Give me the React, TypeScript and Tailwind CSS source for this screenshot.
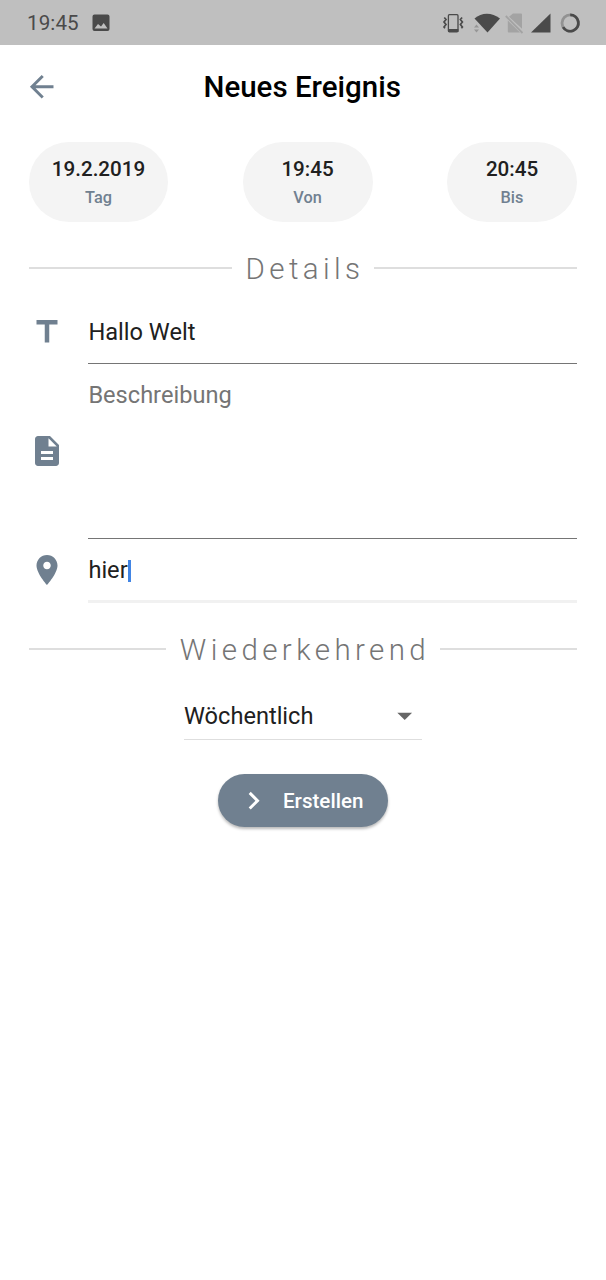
import React from "react";

function Icon({ d, className }: { d: string; className: string }) {
  return (
    <svg viewBox="0 0 24 24" fill="currentColor" className={className}>
      <path d={d} />
    </svg>
  );
}

function StatusBar() {
  return (
    <header className="flex h-[45px] items-center bg-[#bfbfbf] pl-[27px] text-[#4a4a4a]">
      <span className="w-[63px] pt-[2px] text-[20.6px] tracking-[0.1px]">19:45</span>
      <svg viewBox="0 0 22 22" className="size-[22px] shrink-0">
        <path
          fill="currentColor"
          fillRule="evenodd"
          d="M4.500 2.500h13a2 2 0 0 1 2 2v12.500a2 2 0 0 1-2 2H4.500a2 2 0 0 1-2-2V4.500a2 2 0 0 1 2-2zM4.500 16.500h13l-3.800-5.500-2.700 3.500-3-2.500z"
        />
      </svg>
      <svg viewBox="0 0 140 30" className="ml-auto mr-[24px] h-[30px] w-[140px]">
        <g fill="none" stroke="currentColor" strokeWidth="1.300">
          <rect x="6.400" y="6.650" width="9.600" height="17.200" rx="1" />
          <path d="M6 22.500h10.400" strokeWidth="3" />
          <path d="M2.300 9.500l1.700 2-2 2.500 2 2.500-2 2.500 1 1.200M20.100 9.500l-1.700 2 2 2.500-2 2.500 2 2.500-1 1.200" strokeWidth="1.700" />
        </g>
        <path d="M32.500 10.500C39.500 4 50 4 58 10.500L45.500 24.500z" fill="currentColor" />
        <path d="M32 19.500l2.500-3 2.500 3zM32 21.500l2.500 3 2.500-3z" fill="#969696" />
        <path d="M71 5.500H79a1 1 0 0 1 1 1V20.800L67 8.800zM65.800 12.500L78 24.500H66.800a1 1 0 0 1-1-1z" fill="#a3a3a3" />
        <path d="M63.800 8L80.500 25" stroke="#a3a3a3" strokeWidth="1.800" />
        <path d="M108.500 5.500v19H89z" fill="currentColor" />
        <circle cx="128.200" cy="15" r="8.200" fill="none" stroke="#929292" strokeWidth="2.800" />
        <path d="M128.200 6.800a8.200 8.200 0 1 1-7.100 12.300" fill="none" stroke="currentColor" strokeWidth="2.800" />
      </svg>
    </header>
  );
}

function Chip({ value, label, className }: { value: string; label: string; className: string }) {
  return (
    <button className={`flex h-[80px] flex-col items-center rounded-[40px] bg-[#f4f4f4] pt-[15px] font-medium ${className}`}>
      <span className="text-[20.6px] leading-[25px] text-[#202020]">{value}</span>
      <span className="mt-[6px] text-[16.3px] leading-[20px] text-[#708090]">{label}</span>
    </button>
  );
}

function Divider({ title }: { title: string }) {
  return (
    <div className="flex h-[36px] items-center">
      <span className="h-[1.5px] flex-1 bg-[#dedede]" />
      <h2 className="pl-[14px] pr-[10px] pt-[2px] text-[29.5px] leading-[36px] font-light tracking-[4.4px] text-[#757575]">
        {title}
      </h2>
      <span className="h-[1.5px] flex-1 bg-[#dedede]" />
    </div>
  );
}

const ICON_TITLE = "M5 4v3h5.500v12h3V7H19V4z";
const ICON_NOTE = "M14 2H6c-1.100 0-1.990.9-1.990 2L4 20c0 1.100.89 2 1.990 2H18c1.100 0 2-.9 2-2V8l-6-6zm2 16H8v-2h8v2zm0-4H8v-2h8v2zm-3-5V3.500L18.500 9H13z";
const ICON_PLACE = "M12 2C8.130 2 5 5.130 5 9c0 5.250 7 13 7 13s7-7.750 7-13c0-3.870-3.130-7-7-7zm0 9.500c-1.380 0-2.500-1.120-2.500-2.500s1.120-2.500 2.500-2.500 2.500 1.120 2.500 2.500-1.120 2.500-2.500 2.500z";

export default function App() {
  return (
    <div className="min-h-[1280px] w-[606px] bg-white font-['Roboto',sans-serif] text-[#202020]">
      <StatusBar />
      <nav className="flex h-[83px] items-center pl-[23.5px] pr-[24px]">
        <Icon
          className="size-[35.4px] text-[#708090]"
          d="M20 11H7.830l5.590-5.590L12 4l-8 8 8 8 1.410-1.410L7.830 13H20v-2z"
        />
        <h1 className="mr-[36.5px] flex-1 text-center text-[29.5px] leading-[36px] font-medium text-black">
          Neues Ereignis
        </h1>
      </nav>
      <main className="px-[29px]">
        <div className="mt-[14px] flex justify-between">
          <Chip value="19.2.2019" label="Tag" className="w-[139px]" />
          <Chip value="19:45" label="Von" className="w-[130px]" />
          <Chip value="20:45" label="Bis" className="w-[130px]" />
        </div>
        <div className="mt-[28px]">
          <Divider title="Details" />
        </div>
        <section className="mt-[14px] text-[23.6px] leading-[30px]">
          <div className="flex h-[64px] items-start">
            <Icon d={ICON_TITLE} className="mt-[13.500px] size-[36px] text-[#708090]" />
            <div className="ml-[23.400px] h-[64px] flex-1 border-b-[1.5px] border-[#757575] pt-[17px]">Hallo Welt</div>
          </div>
          <div className="flex h-[175px] items-center">
            <Icon d={ICON_NOTE} className="-mt-[1px] size-[36px] text-[#708090]" />
            <div className="ml-[23.400px] h-[175px] flex-1 border-b-[1.5px] border-[#757575] pt-[16px] text-[#757575]">
              Beschreibung
            </div>
          </div>
          <div className="flex h-[64px] items-start">
            <Icon d={ICON_PLACE} className="mt-[13px] size-[36px] text-[#708090]" />
            <div className="ml-[23.400px] flex h-[64px] flex-1 border-b-[3px] border-[#f1f1f1] pt-[16px]">
              hier
              <span className="mt-[5px] h-[22px] w-[3px] bg-[#4285e4]" />
            </div>
          </div>
        </section>
        <div className="mt-[28px]">
          <Divider title="Wiederkehrend" />
        </div>
        <div className="mx-auto mt-[24px] flex h-[49px] w-[238px] items-center justify-between border-b border-[#dedede] text-[23.6px]">
          <span className="pt-[3px]">Wöchentlich</span>
          <Icon d="M7 10l5 5 5-5z" className="mt-[2px] size-[35.4px] text-[#666666]" />
        </div>
        <button className="mx-auto mt-[34px] flex h-[53px] w-[170px] items-center rounded-full bg-[#708090] pl-[18px] text-[20.6px] font-medium text-white shadow-[0_2px_3px_rgba(0,0,0,0.28)]">
          <Icon d="M10 6L8.590 7.410 13.170 12l-4.580 4.590L10 18l6-6z" className="size-[35.4px]" />
          <span className="ml-[11.600px] pt-[2px]">Erstellen</span>
        </button>
      </main>
    </div>
  );
}
